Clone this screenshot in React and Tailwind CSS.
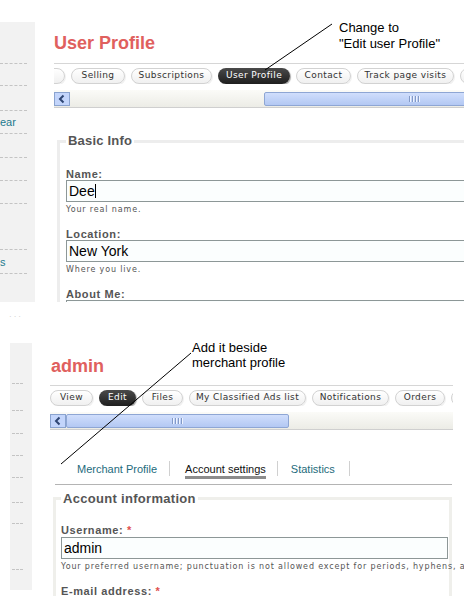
import React from "react";

const topTabs = [
  { label: "Blog", w: 51, ml: -40 },
  { label: "Selling", w: 54 },
  { label: "Subscriptions", w: 81 },
  { label: "User Profile", w: 72, active: true },
  { label: "Contact", w: 55 },
  { label: "Track page visits", w: 97 },
  { label: "Buying", w: 60 },
];

const bottomTabs = [
  { label: "View", w: 43 },
  { label: "Edit", w: 37, active: true },
  { label: "Files", w: 41 },
  { label: "My Classified Ads list", w: 117 },
  { label: "Notifications", w: 77 },
  { label: "Orders", w: 50 },
  { label: "Track", w: 50 },
];

function Pill({ label, w, ml, active }) {
  return (
    <div
      style={{ width: w, marginLeft: ml || 0 }}
      className={
        "shrink-0 h-[16px] rounded-full flex items-center justify-center whitespace-nowrap text-[9px] tracking-[0.4px] font-['DejaVu_Sans',Verdana,sans-serif] " +
        (active
          ? "bg-linear-to-b from-[#4a4a4a] to-[#1f1f1f] text-white shadow-[1px_1px_1px_rgba(0,0,0,0.35)]"
          : "border border-[#d2d2d2] bg-linear-to-b from-white to-[#f0f0f0] text-[#333] shadow-[1px_1px_0_rgba(0,0,0,0.06)]")
      }
    >
      {label}
    </div>
  );
}

function TabBar({ tabs }) {
  return (
    <div className="border-t border-[#d6d6d6] pt-[4px] flex gap-[6px] overflow-hidden">
      {tabs.map((t) => (
        <Pill key={t.label} {...t} />
      ))}
    </div>
  );
}

function ScrollRow({ thumbLeft, thumbWidth }) {
  return (
    <div className="mt-[6px] pt-[2px] pb-[1px] border-b border-[#cfcfcf] flex overflow-hidden bg-linear-to-b from-[#fbfbf8] to-[#ecece6]">
      <div className="shrink-0 w-[16px] h-[14px] border border-[#8aa3cf] bg-[#c3d5fb] flex items-center justify-center">
        <svg width="8" height="10" viewBox="0 0 8 10">
          <path d="M5.5 1.5 L2 5 L5.5 8.5" fill="none" stroke="#2f4673" strokeWidth="2" />
        </svg>
      </div>
      <div
        style={{ marginLeft: thumbLeft, width: thumbWidth }}
        className="shrink-0 h-[14px] rounded-[2px] border border-[#8ea6d4] bg-linear-to-b from-[#d0defc] to-[#b3c8f3] flex items-center justify-center gap-[1px]"
      >
        {[0, 1, 2, 3].map((i) => (
          <div key={i} className="w-[1px] h-[6px] bg-[#8299c6] border-r border-[#eef3ff] box-content" />
        ))}
      </div>
    </div>
  );
}

function Label({ children, star, mt }) {
  return (
    <div
      style={{ marginTop: mt }}
      className="text-[11px] leading-[12px] font-bold text-[#555] tracking-[0.6px]"
    >
      {children}
      {star && <span className="text-[#e05050]"> *</span>}
    </div>
  );
}

function Hint({ children }) {
  return (
    <div className="mt-[2px] text-[8px] leading-[12px] tracking-[0.85px] text-[#555] whitespace-nowrap font-['DejaVu_Sans',Verdana,sans-serif]">
      {children}
    </div>
  );
}

function TextInput({ value, w, caret }) {
  return (
    <div
      style={{ width: w }}
      className="h-[22px] border border-[#8d9797] bg-[#fbfefe] flex items-center pl-[2px] text-[14px] text-black"
    >
      {value}
      {caret && <span className="inline-block w-[1px] h-[14px] bg-black" />}
    </div>
  );
}

export default function App() {
  const topRows = [42, 22, 25, 23, 24, 23, 23, 46, 24];
  const bottomRows = [41, 27, 23, 22, 22, 25, 21, 46];

  return (
    <div className="relative w-[464px] h-[602px] overflow-hidden bg-white font-['Liberation_Sans',Arial,sans-serif]">
      {/* upper capture: user profile page */}
      <div className="h-[302px] overflow-hidden flex items-start">
        <aside className="shrink-0 mt-[22px] w-[35px] h-[280px] bg-[#f2f2f2]">
          {topRows.map((h, i) => (
            <div
              key={i}
              style={{ height: h }}
              className="w-[27px] border-b border-dashed border-[#c4c4c4] flex items-center text-[11px] text-[#1d7a8e] overflow-hidden"
            >
              {i === 3 && <span className="mt-[1px]">ear</span>}
              {i === 8 && <span className="mt-[1px]">s</span>}
            </div>
          ))}
        </aside>

        <main className="ml-[19px] w-[410px] shrink-0 overflow-hidden pt-[32px]">
          <h1 className="text-[18px] leading-[22px] font-bold text-[#e0605e]">User Profile</h1>
          <div className="mt-[9px]">
            <TabBar tabs={topTabs} />
          </div>
          <ScrollRow thumbLeft={194} thumbWidth={300} />

          <fieldset className="mt-[25px] ml-[3px] w-[440px] min-w-0 border-[3px] border-[#ededed] pl-[6px] pb-[20px]">
            <legend className="px-[2px] text-[13px] leading-[16px] font-bold text-[#555] tracking-[0.2px]">
              Basic Info
            </legend>
            <Label mt={19}>Name:</Label>
            <TextInput value="Dee" w={400} caret />
            <Hint>Your real name.</Hint>
            <Label mt={12}>Location:</Label>
            <TextInput value="New York" w={400} />
            <Hint>Where you live.</Hint>
            <Label mt={12}>About Me:</Label>
            <TextInput value="" w={400} />
          </fieldset>
        </main>
      </div>

      <div className="ml-[9px] mt-[11px] h-[8px] text-[8px] leading-[8px] tracking-[2px] text-[#c8c8c8]">···</div>

      {/* lower capture: account edit page */}
      <div className="mt-[22px] h-[253px] overflow-hidden flex items-start">
        <aside className="shrink-0 ml-[10px] w-[22px] h-[247px] bg-[#f2f2f2]">
          {bottomRows.map((h, i) => (
            <div key={i} style={{ height: h }} className="flex items-end">
              <div className="ml-[2px] w-[11px] border-b border-dashed border-[#c4c4c4]" />
            </div>
          ))}
        </aside>

        <main className="ml-[18px] w-[414px] shrink-0 overflow-hidden pt-[12px]">
          <div className="w-[403px]">
            <h1 className="ml-[1px] text-[18px] leading-[22px] font-bold text-[#e0605e]">admin</h1>
            <div className="mt-[8px]">
              <TabBar tabs={bottomTabs} />
            </div>
            <ScrollRow thumbLeft={0} thumbWidth={223} />

            <div className="mt-[33px] flex items-start text-[11px] leading-[13px]">
              <span className="ml-[27px] text-[#1d6b7c]">Merchant Profile</span>
              <span className="ml-[12px] mt-[-2px] w-[1px] h-[15px] bg-[#d0d0d0]" />
              <div className="ml-[15px] flex flex-col">
                <span className="text-[#111]">Account settings</span>
                <span className="h-[3px] bg-[#8c8c8c]" />
              </div>
              <span className="ml-[11px] mt-[-2px] w-[1px] h-[15px] bg-[#d0d0d0]" />
              <span className="ml-[13px] text-[#1d6b7c]">Statistics</span>
              <span className="ml-[14px] mt-[-2px] w-[1px] h-[15px] bg-[#d0d0d0]" />
            </div>
            <div className="mt-[5px] ml-[5px] w-[397px] h-[1px] bg-[#b4b4b4]" />

            <fieldset className="mt-[6px] ml-[3px] w-[399px] min-w-0 border-[3px] border-[#efefeb] pl-[5px] pb-[20px]">
              <legend className="px-[2px] text-[13px] leading-[15px] font-bold text-[#555] tracking-[0.3px]">
                Account information
              </legend>
              <Label mt={18} star>
                Username:
              </Label>
              <div className="mt-[1px]">
                <TextInput value="admin" w={387} />
              </div>
              <Hint>Your preferred username; punctuation is not allowed except for periods, hyphens, apostrophes, and underscores.</Hint>
              <Label mt={12} star>
                E-mail address:
              </Label>
            </fieldset>
          </div>
        </main>
      </div>

      {/* callout notes */}
      <div className="absolute left-[339px] top-[20px] text-[13px] leading-[16px] text-black whitespace-nowrap">
        <div>Change to</div>
        <div>"Edit user Profile"</div>
      </div>
      <div className="absolute left-[192px] top-[340px] text-[13px] leading-[15px] text-black whitespace-nowrap">
        <div>Add it beside</div>
        <div>merchant profile</div>
      </div>
      <svg className="absolute left-0 top-0 pointer-events-none" width="464" height="602">
        <line x1="332" y1="24" x2="265" y2="70" stroke="#000" strokeWidth="1" />
        <line x1="191" y1="353" x2="61" y2="464" stroke="#000" strokeWidth="1" />
      </svg>
    </div>
  );
}
